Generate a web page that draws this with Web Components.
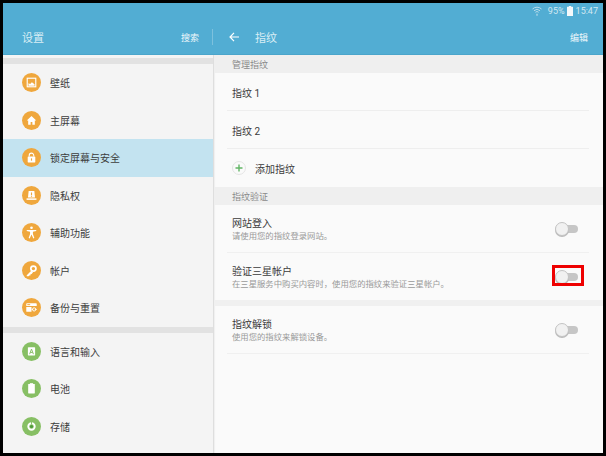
<!DOCTYPE html>
<html lang="zh"><head><meta charset="utf-8"><style>
html,body{margin:0;padding:0;background:#000;height:456px;overflow:hidden}
body{font-family:Roboto,"Noto Sans CJK SC",sans-serif}
</style></head><body>
<settings-app></settings-app>
<script>
const FONT='Roboto,"Noto Sans CJK SC",sans-serif';
const ICONS={
wall:'<rect x="5.500" y="5.500" width="9" height="9" fill="none" stroke="#fff" stroke-width="1.200"/><path d="M6.800 13.300v-2.600l1.800 1 1.800-2 2.800 2.200v1.400z" fill="#fff"/>',
home:'<path d="M10 5.200 5 10h1.500v4.500h2.600v-3h1.800v3h2.600V10H15z" fill="#fff"/>',
lock:'<path d="M7.600 9V7.800a2.400 2.400 0 0 1 4.800 0V9" fill="none" stroke="#fff" stroke-width="1.100"/><rect x="6" y="9" width="8" height="6.200" rx=".5" fill="#fff"/><rect x="9.400" y="10.900" width="1.200" height="2.400" fill="#efa73d"/>',
priv:'<path d="M7 5.200h6l.7 6.800H6.300z" fill="#fff"/><rect x="4.800" y="13" width="10.400" height="1.600" fill="#fff"/><rect x="9.400" y="6.800" width="1.200" height="2.800" fill="#efa73d"/><rect x="9.400" y="10.200" width="1.200" height="1.100" fill="#efa73d"/>',
acc:'<circle cx="10" cy="5" r="1.400" fill="#fff"/><path d="M5 7.300h10v1.100l-3.500.9v2.300l1.500 4.200-1.100.4-1.900-4.200-1.900 4.200-1.100-.4 1.500-4.200V9.300L5 8.400z" fill="#fff"/>',
key:'<circle cx="12" cy="8" r="2.700" fill="none" stroke="#fff" stroke-width="1.800"/><path d="M10 10 5 15v1h2l.6-.7 1.200-.1.200-1.300 1.200-.2 1.400-1.900z" fill="#fff"/>',
back:'<path d="M5.200 5.500h9.600a.7.7 0 0 1 .7.700v2.100h-11V6.200a.7.7 0 0 1 .7-.7z" fill="#fff"/><path d="M4.500 9.400h5.500v5.200H5.200a.7.700 0 0 1-.7-.7z" fill="#fff"/><circle cx="12.800" cy="12" r="1.700" fill="none" stroke="#fff" stroke-width="1"/><path d="M10.200 12h1.500M13.500 12h2" stroke="#fff" stroke-width="1"/><rect x="5.600" y="6.500" width="3" height="1" fill="#efa73d"/>',
lang:'<rect x="6.200" y="5.500" width="7.600" height="8.800" rx=".5" fill="#fff"/><path d="M8 12.800 10 7.400l2 5.400M8.700 11h2.600" fill="none" stroke="#87bf64" stroke-width="1"/>',
batt:'<rect x="8.300" y="4.400" width="3.400" height="1.200" fill="#fff"/><rect x="6.500" y="5.300" width="7" height="10" rx=".5" fill="#fff"/>',
stor:'<circle cx="10" cy="10" r="3.400" fill="none" stroke="#fff" stroke-width="2"/><circle cx="10" cy="10" r="1.600" fill="#4f9a3c"/><path d="M9.500 5h1v3h-1z" fill="#87bf64"/>'
};
class SideItem extends HTMLElement{
 constructor(){super();const s=this.attachShadow({mode:'open'});
 const c=this.getAttribute('color')||'#efa73d';
 s.innerHTML=`<style>
 :host{display:flex;align-items:center;height:37.5px;padding-left:19px;box-sizing:border-box;font:10px ${FONT};color:#3c3c3c}
 :host([selected]){background:#c3e3f0}
 .i{width:19px;height:19px;border-radius:50%;background:${c};flex:none;display:block}
 .t{margin-left:9px}
 </style><svg class="i" viewBox="0 0 20 20">${ICONS[this.getAttribute('icon')]}</svg><span class="t"><slot></slot></span>`;}
}
customElements.define('side-item',SideItem);
class SectionHead extends HTMLElement{
 constructor(){super();this.attachShadow({mode:'open'}).innerHTML=`<style>
 :host{display:flex;align-items:center;height:18px;background:#efefef;padding-left:18px;font:9px ${FONT};color:#8a8a8a}
 </style><slot></slot>`;}
}
customElements.define('section-head',SectionHead);
class SimpleRow extends HTMLElement{
 constructor(){super();this.attachShadow({mode:'open'}).innerHTML=`<style>
 :host{display:flex;align-items:center;height:38px;box-sizing:border-box;margin:0 14px 0 13px;padding:1px 0 0 5px;border-bottom:1px solid #eeeeee;font:10px ${FONT};color:#3a3a3a}
 :host([last]){border-bottom:0;padding-top:0}
 ::slotted(*){flex:none}
 </style><slot></slot>`;}
}
customElements.define('simple-row',SimpleRow);
class AddIcon extends HTMLElement{
 constructor(){super();this.attachShadow({mode:'open'}).innerHTML=`<style>
 :host{display:block;width:14px;height:14px;margin-right:9px}svg{display:block}
 </style><svg width="14" height="14" viewBox="0 0 14 14"><circle cx="7" cy="7" r="6.500" fill="none" stroke="#e4e4e4"/><path d="M7 3.500v7M3.500 7h7" stroke="#62b565" stroke-width="1.400"/></svg>`;}
}
customElements.define('add-icon',AddIcon);
class ToggleSwitch extends HTMLElement{
 constructor(){super();this.attachShadow({mode:'open'}).innerHTML=`<style>
 :host{display:block;position:relative;width:23px;height:14px;flex:none}
 .track{position:absolute;left:3px;right:0;top:3px;height:8px;border-radius:4px;background:#c6c6c6}
 .thumb{position:absolute;left:0;top:0;width:12px;height:12px;border-radius:50%;background:#f1f1f1;border:1px solid #c4c4c4;box-shadow:0 1px 0 #bbb}
 </style><div class="track"></div><div class="thumb"></div>`;}
}
customElements.define('toggle-switch',ToggleSwitch);
class ToggleRow extends HTMLElement{
 constructor(){super();const s=this.attachShadow({mode:'open'});s.innerHTML=`<style>
 :host{display:flex;align-items:center;height:47.500px;box-sizing:border-box;margin:0 14px 0 13px;padding:0 11px 0 5px;border-bottom:1px solid #f0f0f0}
 :host([noline]){border-bottom:0}
 .b{flex:1;min-width:0;padding-top:3px}
 .t{font:10px/13px ${FONT};color:#3a3a3a}
 .s{font:8.350px/13px ${FONT};color:#999}
 .w{position:relative;display:block;margin-top:2px}
 .mark{position:absolute;left:-3px;top:-5.500px;width:26px;height:15px;border:3px solid #ee0000}
 </style><div class="b"><div class="t">${this.getAttribute('label')}</div><div class="s">${this.getAttribute('sub')}</div></div>
 <div class="w"><toggle-switch></toggle-switch>${this.hasAttribute('marked')?'<div class="mark"></div>':''}</div>`;}
}
customElements.define('toggle-row',ToggleRow);
class StatusBar extends HTMLElement{
 constructor(){super();this.attachShadow({mode:'open'}).innerHTML=`<style>
 :host{display:flex;justify-content:flex-end;align-items:center;height:16px;padding-right:5px;font:9px ${FONT};color:#d3e9f2}
 svg{display:block;flex:none}
 .p{margin:0 2px 0 6px}.c{margin-left:3px}
 </style><svg width="10" height="10" viewBox="0 0 10 10" opacity=".75"><path d="M.5 3a6.500 6.500 0 0 1 9 0M2 4.700a4.300 4.300 0 0 1 6 0M3.400 6.300a2.200 2.200 0 0 1 3.200 0" fill="none" stroke="#dcecf3" stroke-width="1"/><path d="M5 7 4 9.500h2z" fill="#dcecf3"/></svg><span class="p">95%</span><svg width="6" height="10" viewBox="0 0 6 10"><rect y=".8" width="6" height="9.200" fill="#f4f9fb"/><rect x="1.800" width="2.400" height="1" fill="#f4f9fb"/></svg><span class="c">15:47</span>`;}
}
customElements.define('status-bar',StatusBar);
class AppHeader extends HTMLElement{
 constructor(){super();this.attachShadow({mode:'open'}).innerHTML=`<style>
 :host{display:block;height:52px;background:#52add3;color:#d9edf5;box-shadow:inset 0 -1px 0 #4aa5cb}
 .m{display:flex;align-items:center;height:36px;font:11px ${FONT}}
 .l{width:210px;height:100%;box-sizing:border-box;display:flex;align-items:center;padding-left:19px;position:relative}
 .l:after{content:"";position:absolute;right:0;top:10px;height:16px;width:1px;background:#7dc1dd}
 .ttl{flex:1}
 .act{font-size:9px;margin-right:14px;color:#f0f8fb}
 .r{flex:1;display:flex;align-items:center;height:100%}
 .r svg{margin-left:16px;display:block}
 .r .ttl{margin-left:16px}
 .r .act{margin-right:15px}
 </style><status-bar></status-bar><div class="m"><div class="l"><span class="ttl">设置</span><span class="act">搜索</span></div>
 <div class="r"><svg width="10" height="10" viewBox="0 0 10 10"><path d="M5 .8 1 5l4 4.200M1 5h9" fill="none" stroke="#fff" stroke-width="1.200"/></svg><span class="ttl">指纹</span><span class="act">编辑</span></div></div>`;}
}
customElements.define('app-header',AppHeader);
class SidePanel extends HTMLElement{
 constructor(){super();this.attachShadow({mode:'open'}).innerHTML=`<style>
 :host{display:block;width:210px;height:398px;background:#f4f4f4;overflow:hidden;box-sizing:border-box;padding-top:3px;flex:none}
 .band{height:6px;background:#e2e2e2}
 </style><div class="band"></div><slot name="a"></slot><div class="band"></div><slot name="b"></slot>`;}
}
customElements.define('side-panel',SidePanel);
class DetailPanel extends HTMLElement{
 constructor(){super();this.attachShadow({mode:'open'}).innerHTML=`<style>
 :host{display:block;flex:1;min-width:0;background:#fafafa;border-left:1px solid #dedede;box-shadow:inset 1px 0 1px #efefef;height:398px;overflow:hidden;box-sizing:border-box}
 </style><slot></slot>`;}
}
customElements.define('detail-panel',DetailPanel);
class BandGap extends HTMLElement{
 constructor(){super();this.attachShadow({mode:'open'}).innerHTML=`<style>:host{display:block;height:6px;background:#f0f0f0}</style>`;}
}
customElements.define('band-gap',BandGap);
class SettingsApp extends HTMLElement{
 constructor(){super();this.attachShadow({mode:'open'}).innerHTML=`<style>
 :host{display:block;box-sizing:border-box;width:606px;height:456px;padding:3px;background:#000}
 .body{display:flex}
 </style><app-header></app-header><div class="body">
 <side-panel>
  <side-item slot="a" icon="wall">壁纸</side-item>
  <side-item slot="a" icon="home">主屏幕</side-item>
  <side-item slot="a" icon="lock" selected>锁定屏幕与安全</side-item>
  <side-item slot="a" icon="priv">隐私权</side-item>
  <side-item slot="a" icon="acc">辅助功能</side-item>
  <side-item slot="a" icon="key">帐户</side-item>
  <side-item slot="a" icon="back">备份与重置</side-item>
  <side-item slot="b" icon="lang" color="#87bf64">语言和输入</side-item>
  <side-item slot="b" icon="batt" color="#87bf64">电池</side-item>
  <side-item slot="b" icon="stor" color="#87bf64">存储</side-item>
 </side-panel>
 <detail-panel>
  <section-head>管理指纹</section-head>
  <simple-row>指纹 1</simple-row>
  <simple-row>指纹 2</simple-row>
  <simple-row last><add-icon></add-icon>添加指纹</simple-row>
  <section-head>指纹验证</section-head>
  <toggle-row label="网站登入" sub="请使用您的指纹登录网站。"></toggle-row>
  <toggle-row label="验证三星帐户" sub="在三星服务中购买内容时，使用您的指纹来验证三星帐户。" marked noline></toggle-row>
  <band-gap></band-gap>
  <toggle-row label="指纹解锁" sub="使用您的指纹来解锁设备。"></toggle-row>
 </detail-panel></div>`;}
}
customElements.define('settings-app',SettingsApp);
</script>
</body></html>
